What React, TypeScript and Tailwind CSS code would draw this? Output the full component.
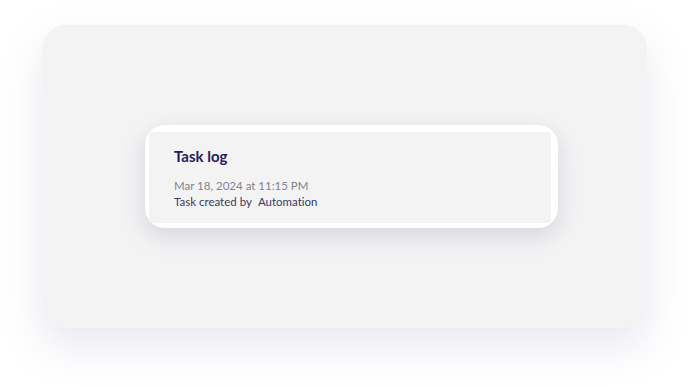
export default function App() {
  return (
    <div className="w-[689px] h-[387px] bg-white flex justify-center pt-[25px]" style={{ fontFamily: "Lato, 'Open Sans', sans-serif" }}>
      <div className="w-[605px] h-[303px] rounded-[24px] bg-[#f3f3f4] shadow-[0_18px_42px_rgba(120,125,170,0.17)] flex items-center pl-[103px]">
        <div className="w-[413px] h-[103px] rounded-[20px] bg-white pl-[4px] pr-[7px] pt-[7px] pb-[5px] shadow-[0_8px_22px_rgba(110,115,145,0.22)]">
          <div className="h-full rounded-[3px] bg-[#f3f3f4] pl-[25px] pt-[14px] [font-variant-ligatures:none]">
            <div className="text-[15px] leading-[20px] font-bold text-[#1f2158]">Task log</div>
            <div className="mt-[12px] text-[11.5px] leading-[16px] text-[#80838f]">Mar 18, 2024 at 11:15 PM</div>
            <div className="text-[11.5px] leading-[16px] text-[#3a3b58]">
              Task created by<span className="ml-[6px] text-[#363a66]">Automation</span>
            </div>
          </div>
        </div>
      </div>
    </div>
  );
}
